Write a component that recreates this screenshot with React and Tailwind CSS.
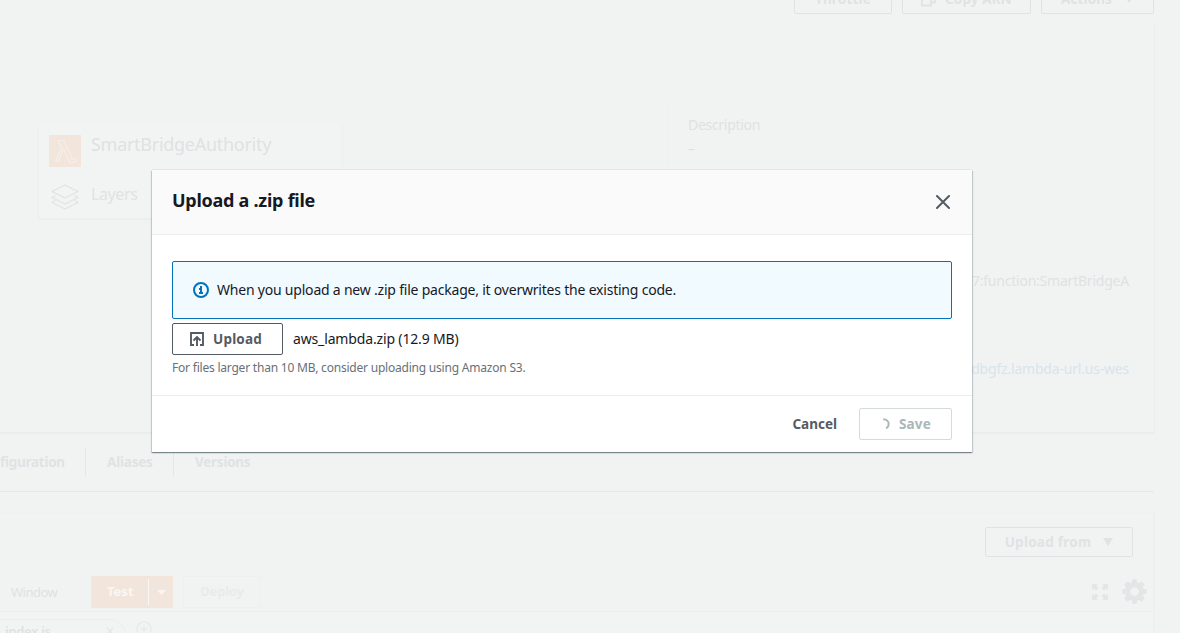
function Ghost({ className = "", children }) {
  return (
    <div className={`flex shrink-0 items-center justify-center rounded-[2px] border border-[#e0e3e3] text-[13.5px] font-bold text-[#e0e2e3] ${className}`}>
      {children}
    </div>
  );
}

function Caret({ className = "" }) {
  return (
    <svg className={className} width="10" height="8" viewBox="0 0 10 8" fill="currentColor">
      <path d="M0 0h10L5 8z" />
    </svg>
  );
}

function FunctionNode() {
  return (
    <div className="ml-[38px] mt-[100px] h-[94px] w-[305px] border border-[#ecefef] border-t-[#f3f5f5] bg-[#f2f4f4] shadow-[0_1px_1px_#ebeeee]">
      <div className="flex h-[50px] pl-[10px] pt-[8px]">
        <svg className="mt-px" width="32" height="32" viewBox="0 0 32 32">
          <rect width="32" height="32" fill="#f2e5db" />
          <path d="M9.500 5.500h5.500l8 18.500 3-1 1 3-6 2-6.500-14-5.500 12.500H6.500L12.500 13 11.500 9H9.500z" fill="none" stroke="#f5efea" strokeWidth="1.200" />
        </svg>
        <span className="ml-[10px] mt-[-2px] text-[18px] leading-[25px] tracking-[-0.28px] text-[#dfe1e2]">SmartBridgeAuthority</span>
      </div>
      <div className="flex pl-[12px] pt-[7px]">
        <svg width="28" height="28" viewBox="0 0 28 28" fill="none" stroke="#e0e2e3" strokeWidth="1.300" strokeLinejoin="round">
          <path d="M14 2L27 8.500 14 15 1 8.500z" />
          <path d="M4.500 12.500L1 14.500 14 21l13-6.500-3.500-2" />
          <path d="M4.500 17.500L1 19.500 14 26l13-6.500-3.500-2" />
        </svg>
        <span className="ml-[12px] mt-[-1px] text-[16px] leading-6 tracking-[-0.4px] text-[#e0e2e3]">Layers</span>
      </div>
    </div>
  );
}

function Overview() {
  return (
    <section className="flex h-[410px] w-[1155px] shrink-0 border-b-2 border-r border-t border-[#eaeded] border-t-[#f0f2f2]">
      <div className="w-[668px]">
        <FunctionNode />
      </div>
      <div className="mt-[80px] h-[310px] flex-1 border-l border-[#edf0f0] pl-[19px] pt-[10px] text-sm leading-5 text-[#dfe1e2]">
        <div className="tracking-[-0.3px]">Description</div>
        <div className="mt-[4px]">–</div>
        <div className="mt-[112px] pr-[25px] text-right tracking-[-0.22px]">7:function:SmartBridgeA</div>
        <div className="mt-[68px] pr-[25px] text-right tracking-[-0.2px] text-[#d8e4eb]">dbgfz.lambda-url.us-wes</div>
      </div>
    </section>
  );
}

function Tabs() {
  return (
    <nav className="flex h-[58px] w-[1154px] shrink-0 items-start border-b border-[#e4e8e8] pt-[13px] text-[13.5px] font-bold leading-[30px] text-[#e0e2e3]">
      <span className="w-[86px] border-r border-[#e5e8e8] tracking-[-0.27px]">figuration</span>
      <span className="w-[88px] border-r border-[#e5e8e8] pl-[21px] tracking-[-0.2px]">Aliases</span>
      <span className="pl-[21px] tracking-[-0.25px]">Versions</span>
    </nav>
  );
}

function Editor() {
  return (
    <section className="mt-5 flex w-[1155px] shrink-0 flex-col border-r-2 border-t border-[#edf0f0] border-t-[#eff1f1]">
      <div className="flex justify-end pr-[20px] pt-[14px]">
        <Ghost className="h-[30px] w-[148px] tracking-[0.25px]">
          Upload from <Caret className="ml-[12px]" />
        </Ghost>
      </div>
      <div className="mt-[19px] flex h-[36px] items-start border-b border-[#ecefef]">
        <span className="w-[91px] pl-[11px] text-[13px] leading-8 tracking-[-0.5px] text-[#dfe1e2]">Window</span>
        <div className="flex h-8 w-[82px] items-center bg-[#f2e5db] text-[13px] font-bold text-[#f8f7f6]">
          <span className="w-[57px] pl-[16px]">Test</span>
          <span className="h-[26px] w-px bg-[#f8f7f6]" />
          <svg className="ml-[8px]" width="9" height="5" viewBox="0 0 9 5" fill="currentColor"><path d="M0 0h9L4.500 5z" /></svg>
        </div>
        <div className="ml-[10px] flex h-8 w-[78px] items-center justify-center border border-[#edf0f0] text-[13px] font-bold tracking-[-0.2px] text-[#e8ebeb]">Deploy</div>
        <div className="ml-auto flex items-center pr-[6px] pt-[3px] text-[#e3e5e6]">
          <svg width="18" height="18" viewBox="0 0 18 18" fill="currentColor">
            <path d="M1 1h6L5.200 2.800 7.500 5 5 7.500 2.800 5.200 1 7zM17 1v6l-1.800-1.800L13 7.500 10.500 5l2.300-2.200L11 1zM1 17v-6l1.800 1.800L5 10.500 7.500 13l-2.300 2.200L7 17zM17 17h-6l1.800-1.800L10.500 13l2.500-2.500 2.200 2.300L17 11z" />
          </svg>
          <svg className="ml-[13px]" width="25" height="25" viewBox="-12 -12 24 24">
            <g fill="currentColor">
              <rect x="-2.500" y="-11.700" width="5" height="23.400" rx="1" />
              <rect x="-2.500" y="-11.700" width="5" height="23.400" rx="1" transform="rotate(45)" />
              <rect x="-2.500" y="-11.700" width="5" height="23.400" rx="1" transform="rotate(90)" />
              <rect x="-2.500" y="-11.700" width="5" height="23.400" rx="1" transform="rotate(135)" />
              <circle r="9" />
            </g>
            <circle r="4.200" fill="#f1f3f3" />
          </svg>
        </div>
      </div>
      <div className="flex h-8 bg-[#f2f4f4] pt-[7px]">
        <div className="flex h-8 w-[126px] rounded-tr-[16px] border-r border-t border-[#eceeee] pl-[5px] pt-px text-[13px] font-semibold leading-5 tracking-[-0.35px] text-[#dfe1e2]">
          index.js
          <svg className="ml-[55px] mt-[6px]" width="8" height="8" viewBox="0 0 8 8" stroke="#e3e5e6" strokeWidth="1.300"><path d="M1 1l6 6M7 1L1 7" /></svg>
        </div>
        <svg className="ml-[10px] mt-[2px]" width="16" height="16" viewBox="0 0 16 16" fill="none" stroke="#e5e8e8" strokeWidth="1.200"><circle cx="8" cy="8" r="7" /><path d="M8 4.500v7M4.500 8h7" /></svg>
      </div>
    </section>
  );
}

function UploadDialog() {
  return (
    <div role="dialog" className="flex h-[282px] w-[820px] flex-col bg-white shadow-[0_1px_1px_0_rgba(0,28,36,0.3),1px_1px_1px_0_rgba(0,28,36,0.15),-1px_1px_1px_0_rgba(0,28,36,0.15),0_-1px_0_0_#e3e6e6]">
      <header className="flex h-[65px] items-center justify-between border-b border-[#eaeded] bg-[#fafafa] px-5">
        <h2 className="mt-[-5px] text-[18px] font-bold leading-[22px] tracking-[-0.26px] text-[#16191f]">Upload a .zip file</h2>
        <svg className="mr-[2px]" width="14" height="14" viewBox="0 0 14 14" stroke="#545b64" strokeWidth="2" strokeLinecap="round"><path d="M1 1l12 12M13 1L1 13" /></svg>
      </header>
      <div className="flex h-[160px] flex-col px-5 pt-[26px]">
        <div className="flex h-[58px] items-center rounded-[2px] border border-[#0073bb] bg-[#f1faff] pl-5 text-sm text-[#16191f]">
          <svg width="16" height="16" viewBox="0 0 16 16" fill="none" stroke="#0073bb" strokeWidth="2">
            <circle cx="8" cy="8" r="7" />
            <path d="M8 12V7H6M6 11h4M8 6V4" />
          </svg>
          <span className="ml-[8px] tracking-[-0.21px]">When you upload a new .zip file package, it overwrites the existing code.</span>
        </div>
        <div className="mt-1 flex items-center">
          <button className="flex h-8 w-[111px] items-center rounded-[2px] border border-[#545b64] pl-[17px] text-[13.5px] font-bold tracking-[0.2px] text-[#545b64]">
            <svg width="14" height="14" viewBox="0 0 14 14" fill="none" stroke="currentColor" strokeWidth="1.900">
              <path d="M4 13H1V1h12v12h-3M7 14V5M3.500 8.500L7 5l3.500 3.500" />
            </svg>
            <span className="ml-[9px]">Upload</span>
          </button>
          <span className="ml-[10px] text-sm tracking-[-0.15px] text-[#16191f]">aws_lambda.zip (12.9 MB)</span>
        </div>
        <p className="mt-[4px] text-xs leading-[18px] tracking-[-0.21px] text-[#687078]">For files larger than 10 MB, consider uploading using Amazon S3.</p>
      </div>
      <footer className="flex h-[57px] items-center justify-end border-t border-[#eaeded] pr-5 text-[13.500px] font-bold">
        <span className="text-[#545b64]">Cancel</span>
        <button className="ml-[22px] flex h-8 w-[93px] items-center rounded-[2px] border border-[#d5dbdb] pl-[22px] tracking-[0.15px] text-[#aab7b8]">
          <svg width="9" height="12" viewBox="0 0 9 12" fill="none" stroke="currentColor" strokeWidth="2"><path d="M1.200 1.200C4.500 1.200 6.700 3.500 6.700 6c0 2-1 3.500-2.500 4.500" /></svg>
          <span className="ml-[8px]">Save</span>
        </button>
      </footer>
    </div>
  );
}

export default function App() {
  return (
    <div className="relative h-[633px] w-[1180px] overflow-hidden bg-[#f1f3f3] font-['Noto_Sans',sans-serif]">
      <div className="flex h-full flex-col">
        <div className="flex h-6 w-[1154px] shrink-0 items-start justify-end gap-[10px]">
          <Ghost className="-mt-[18px] h-8 w-[98px] pt-[2px] tracking-[0.2px]">Throttle</Ghost>
          <Ghost className="-mt-[18px] h-8 w-[129px] pt-[2px] tracking-[0.15px]">
            <svg className="mr-[9px]" width="15" height="16" viewBox="0 0 15 16" fill="none" stroke="currentColor" strokeWidth="1.800"><path d="M1 5h9v9.500H1zM5 5V1h9v10.500h-4" /></svg>
            Copy ARN
          </Ghost>
          <Ghost className="-mt-[18px] h-8 w-[113px] pt-[2px] tracking-[0.1px]">
            Actions <Caret className="ml-[12px]" />
          </Ghost>
        </div>
        <Overview />
        <Tabs />
        <Editor />
      </div>
      <div className="absolute inset-0 pl-[152px] pt-[170px]">
        <UploadDialog />
      </div>
    </div>
  );
}
